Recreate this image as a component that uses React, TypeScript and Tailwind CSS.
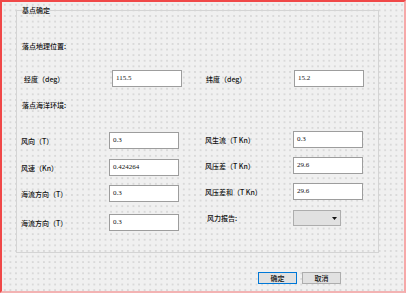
import React from 'react';

const cjk = "font-['SimSun','Noto_Sans_CJK_SC',sans-serif] font-medium";

interface FieldProps {
  label: string;
  value: string;
}

const Field: React.FC<FieldProps> = ({ label, value }) => (
  <div className="flex items-center h-[17px]">
    <span className={`w-[88px] text-[7px] leading-[10px] text-[#111] whitespace-nowrap ${cjk}`}>{label}</span>
    <div className="w-[70px] h-[17px] bg-white border border-[#9d9d9d] flex items-center px-[3px]">
      <span className="text-[7px] leading-[8px] text-[#111] font-['Liberation_Serif',serif] -mt-[2px]">{value}</span>
    </div>
  </div>
);

const App: React.FC = () => {
  return (
    <div className="w-[406px] h-[293px] box-border border-l-2 border-t-2 border-r-2 border-b-2 border-l-[#f04848] border-t-[#f04848] border-r-[#f6a8a8] border-b-[#f3b3b3] bg-[#f0f0f0] bg-[radial-gradient(circle,#d2d2d2_0.6px,transparent_0.85px)] bg-[length:5.6px_5.6px] overflow-hidden">
      {/* group box */}
      <fieldset className="ml-[14px] mt-[3px] w-[363px] h-[248px] border border-[#d4d4d4]">
        <legend className={`ml-[5px] text-[7px] leading-[10px] text-[#111] ${cjk}`}>基点确定</legend>

        <div className="pl-[5px] mt-[26px] text-[7px] leading-[10px] text-[#111]">
          <span className={cjk}>落点地理位置:</span>
        </div>

        <div className="flex items-center pl-[7px] mt-[18px] gap-[24px]">
          <Field label="经度（deg）" value="115.5" />
          <Field label="纬度（deg）" value="15.2" />
        </div>

        <div className="pl-[5px] mt-[13px] text-[7px] leading-[10px] text-[#111]">
          <span className={cjk}>落点海洋环境:</span>
        </div>

        <div className="flex pl-[4px] mt-[21px] gap-[26px]">
          {/* left column */}
          <div className="flex flex-col">
            <Field label="风向（T）" value="0.3" />
            <div className="mt-[10px]"><Field label="风速（Kn）" value="0.424264" /></div>
            <div className="mt-[9px]"><Field label="海流方向（T）" value="0.3" /></div>
            <div className="mt-[12px]"><Field label="海流方向（T）" value="0.3" /></div>
          </div>
          {/* right column */}
          <div className="flex flex-col -mt-[1px]">
            <Field label="风生流（T Kn）" value="0.3" />
            <div className="mt-[9px]"><Field label="风压差（T Kn）" value="29.6" /></div>
            <div className="mt-[9px]"><Field label="风压差和（T Kn）" value="29.6" /></div>
            <div className="mt-[10px] flex items-center h-[16px]">
              <span className={`w-[88px] pl-[2px] text-[7px] leading-[10px] text-[#111] ${cjk}`}>风力报告:</span>
              <div className="w-[48px] h-[16px] bg-[#e1e1e1] border border-[#adadad] flex items-center justify-end pr-[3px]">
                <svg width="5" height="3" viewBox="0 0 5 3">
                  <path d="M0 0h5L2.5 3z" fill="#111" />
                </svg>
              </div>
            </div>
          </div>
        </div>
      </fieldset>

      {/* buttons */}
      <div className="flex justify-end gap-[5px] w-[339px] mt-[19px]">
        <button className={`w-[39px] h-[12px] bg-[#e1e1e1] border border-[#0078d7] text-[7px] leading-[10px] text-[#111] flex items-center justify-center ${cjk}`}>
          确定
        </button>
        <button className={`w-[39px] h-[12px] bg-[#e1e1e1] border border-[#adadad] text-[7px] leading-[10px] text-[#111] flex items-center justify-center ${cjk}`}>
          取消
        </button>
      </div>
    </div>
  );
};

export default App;
